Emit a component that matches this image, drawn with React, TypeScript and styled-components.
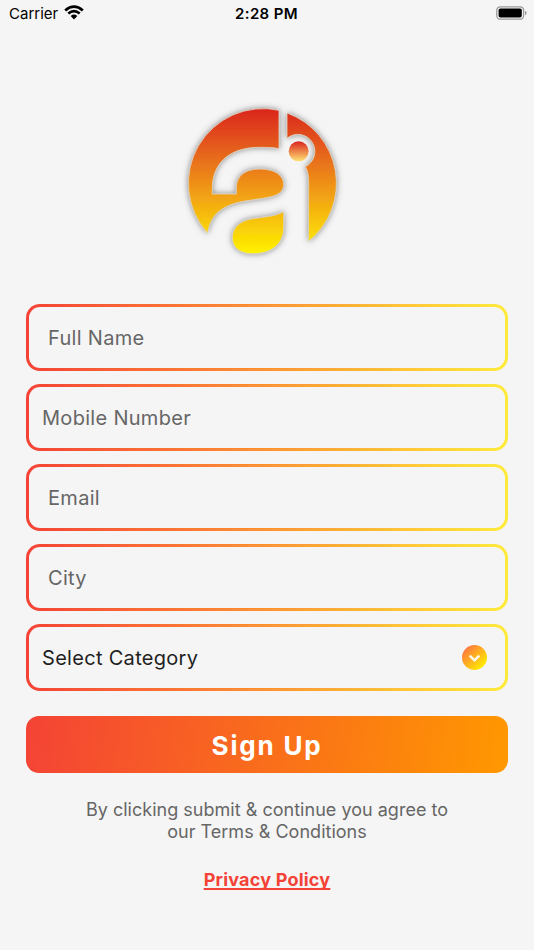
import React from "react";
import styled, { createGlobalStyle } from "styled-components";

const GlobalStyle = createGlobalStyle`
  * { box-sizing: border-box; }
  body { margin: 0; background: #f5f5f5; font-family: Inter, "Liberation Sans", sans-serif; }
`;

const Screen = styled.main`
  width: 534px;
  height: 950px;
  display: flex;
  flex-direction: column;
  overflow: hidden;
  background: #f5f5f5;
`;

const StatusBar = styled.header`
  height: 28px;
  padding: 0 7px 2px 9px;
  display: grid;
  grid-template-columns: 1fr auto 1fr;
  align-items: center;
  font-size: 15px;
  color: #000;
`;

const Carrier = styled.div`
  display: flex;
  align-items: center;
  gap: 6px;
  svg { display: block; margin-top: -1px; }
`;

const Clock = styled.time`
  margin-right: 3px;
  font-weight: 600;
  letter-spacing: 0.35px;
`;

const Battery = styled.svg`
  display: block;
  justify-self: end;
`;

const LogoArea = styled.div`
  height: 276px;
  padding: 67px 0 0 176px;
  flex: none;
`;

const Form = styled.form`
  display: flex;
  flex-direction: column;
  gap: 13px;
  padding: 0 26px;
`;

const Field = styled.div<{ $inset: number }>`
  height: 67px;
  display: flex;
  align-items: center;
  justify-content: space-between;
  padding: 0 18px 0 ${(p) => p.$inset}px;
  border: 3px solid transparent;
  border-radius: 14px;
  background:
    linear-gradient(#f5f5f5, #f5f5f5) padding-box,
    linear-gradient(90deg, #f44336, #ff9333 50%, #ffeb3b) border-box;
`;

const Input = styled.input`
  width: 100%;
  padding: 0;
  border: 0;
  outline: 0;
  background: transparent;
  font: 400 20px Inter, "Liberation Sans", sans-serif;
  letter-spacing: 0.3px;
  &::placeholder { color: #666; opacity: 1; }
`;

const Selected = styled.span`
  font-size: 20px;
  letter-spacing: 0.3px;
  color: #1f1f1f;
`;

const SubmitButton = styled.button`
  height: 57px;
  margin: 12px 0 0;
  padding: 1px 0 0;
  border: 0;
  border-radius: 13px;
  background: linear-gradient(98deg, #f44336, #ff9800);
  color: #fff;
  font: 700 26px Inter, "Liberation Sans", sans-serif;
  letter-spacing: 1.8px;
`;

const Terms = styled.p`
  margin: 26px 0 0;
  text-align: center;
  font-size: 18px;
  line-height: 22px;
  letter-spacing: 0.02px;
  color: #666;
`;

const PrivacyLink = styled.a`
  align-self: center;
  margin-top: 26px;
  font-size: 18px;
  line-height: 22px;
  font-weight: 700;
  letter-spacing: 0.2px;
  color: #f44336;
  text-decoration: underline;
  text-decoration-thickness: 1.5px;
  text-underline-offset: 2px;
  text-decoration-skip-ink: none;
`;

const Logo = () => (
  <svg width="175" height="175" viewBox="0 0 525 525">
    <defs>
      <linearGradient id="sunset" gradientUnits="userSpaceOnUse" x1="0" y1="41" x2="0" y2="476">
        <stop offset="0" stopColor="#da251d" />
        <stop offset="0.5" stopColor="#ee8d19" />
        <stop offset="1" stopColor="#fff200" />
      </linearGradient>
      <linearGradient id="dot" x1="0" y1="0" x2="0" y2="1">
        <stop offset="0" stopColor="#da251d" />
        <stop offset="1" stopColor="#ffe375" />
      </linearGradient>
      <filter id="shade" x="-10%" y="-10%" width="120%" height="120%">
        <feDropShadow dx="0" dy="0" stdDeviation="9" floodColor="#555" floodOpacity="0.7" />
      </filter>
    </defs>
    <g filter="url(#shade)" fill="url(#sunset)" stroke="#ddd3c0" strokeWidth="2.500">
      <path d="M95 415A224 224 0 0 1 309 46V161C292 157 270 157 247 157C161 158 109 204 109 280V297H181V280C181 241 208 222 252 222C298 222 323 242 323 268C323 295 300 304 260 310L207 318C139 330 103 358 95 415Z" />
      <path d="M323 350V397C323 447 287 476 230 476C190 476 169 456 169 428C169 397 192 377 230 371L273 365C292 362 309 358 323 350Z" />
      <path d="M333 54A224 224 0 0 1 398 439V263C398 243 396 229 388 215A51 51 0 1 0 333 130Z" />
    </g>
    <circle cx="368" cy="169" r="30" fill="url(#dot)" />
  </svg>
);

const WifiIcon = () => (
  <svg width="20" height="15" viewBox="0 0 20 15">
    <g fill="none" stroke="#000" strokeWidth="2.700">
      <path d="M1.200 5.400Q10-2.200 18.800 5.400" />
      <path d="M4.300 8.600Q10 3.700 15.700 8.600" />
    </g>
    <path d="M6.700 11Q10 8.200 13.300 11L10 14.400Z" />
  </svg>
);

const ChevronBadge = () => (
  <svg width="25" height="25" viewBox="0 0 25 25">
    <defs>
      <linearGradient id="badge" x1="0" y1="0" x2="1" y2="1">
        <stop offset="0.08" stopColor="#ff7043" />
        <stop offset="0.85" stopColor="#ffeb00" />
      </linearGradient>
    </defs>
    <circle cx="12.500" cy="12.500" r="12.500" fill="url(#badge)" />
    <path d="M7.700 10.700L12.500 15.400L17.300 10.700" fill="none" stroke="#fffaf0" strokeWidth="2.400" />
  </svg>
);

const fields = [
  { name: "Full Name", inset: 19 },
  { name: "Mobile Number", inset: 13 },
  { name: "Email", inset: 19 },
  { name: "City", inset: 19 },
];

export default function App() {
  return (
    <Screen>
      <GlobalStyle />
      <StatusBar>
        <Carrier>Carrier <WifiIcon /></Carrier>
        <Clock>2:28 PM</Clock>
        <Battery width="31" height="14" viewBox="0 0 31 14">
          <rect x="0.800" y="0.800" width="26.800" height="12.400" rx="3.500" fill="none" stroke="#999" strokeWidth="1.300" />
          <rect x="2.600" y="2.500" width="23.200" height="9" rx="1.800" />
          <path d="M29.200 4.800Q32 7 29.200 9.200Z" fill="#888" />
        </Battery>
      </StatusBar>
      <LogoArea><Logo /></LogoArea>
      <Form onSubmit={(e) => e.preventDefault()}>
        {fields.map((f) => (
          <Field key={f.name} $inset={f.inset}>
            <Input placeholder={f.name} />
          </Field>
        ))}
        <Field $inset={13}>
          <Selected>Select Category</Selected>
          <ChevronBadge />
        </Field>
        <SubmitButton type="submit">Sign Up</SubmitButton>
      </Form>
      <Terms>By clicking submit &amp; continue you agree to<br />our Terms &amp; Conditions</Terms>
      <PrivacyLink href="#privacy">Privacy Policy</PrivacyLink>
    </Screen>
  );
}
